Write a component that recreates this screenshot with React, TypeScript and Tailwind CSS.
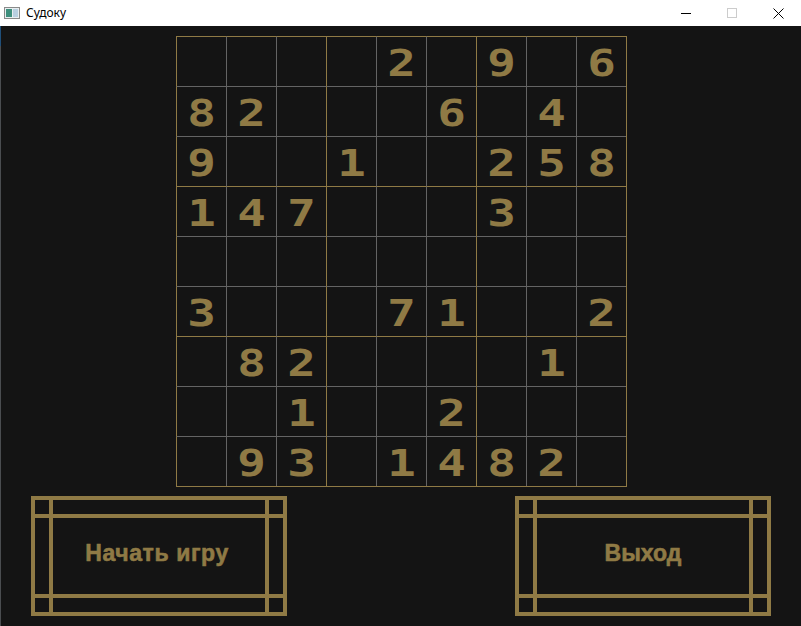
const board = [
  "    2 9 6",
  "82   6 4 ",
  "9  1  258",
  "147   3  ",
  "         ",
  "3   71  2",
  " 82    1 ",
  "  1  2   ",
  " 93 1482 ",
];

function Cell({ value, row, col }: { value: string; row: number; col: number }) {
  const left = col % 3 === 0 ? "border-l-[#8f7a45]" : "border-l-[#646464]";
  const top = row % 3 === 0 ? "border-t-[#8f7a45]" : "border-t-[#646464]";
  return (
    <div
      className={`w-[50px] h-[50px] border-l border-t ${left} ${top} flex items-center justify-center`}
    >
      {value.trim() && (
        <span className="font-['DejaVu_Sans_Mono',monospace] font-bold text-[38px] leading-none text-[#8f7a45] scale-x-[1.25] translate-y-[1px]">
          {value}
        </span>
      )}
    </div>
  );
}

function FrameButton({ label, wide }: { label: string; wide?: boolean }) {
  return (
    <button
      type="button"
      className="relative w-[256px] h-[120px] border-4 border-[#8f7a45] flex items-center justify-center"
    >
      {/* decorative frame lines */}
      <span className="absolute left-0 right-0 top-[14px] h-[4px] bg-[#8f7a45]" />
      <span className="absolute left-0 right-0 bottom-[14px] h-[4px] bg-[#8f7a45]" />
      <span className="absolute top-0 bottom-0 left-[14px] w-[4px] bg-[#8f7a45]" />
      <span className="absolute top-0 bottom-0 right-[14px] w-[4px] bg-[#8f7a45]" />
      <span
        className={`font-['Liberation_Sans',Arial,sans-serif] font-bold text-[23px] text-[#8f7a45] -mt-[5px] [-webkit-text-stroke:0.6px_#8f7a45] ${
          wide ? "tracking-[0.6px] -ml-[4px]" : ""
        }`}
      >
        {label}
      </span>
    </button>
  );
}

export default function App() {
  return (
    <div className="w-[801px] h-[626px] bg-[#141414] flex flex-col overflow-hidden">
      {/* title bar */}
      <div className="h-[26px] bg-white flex items-center shrink-0">
        <div className="ml-[4px] w-[16px] h-[12px] border border-[#8a8a8a] bg-[#e8eef0] flex p-[1px] gap-[1px]">
          <div className="w-[6px] bg-[#3e8f7d]" />
          <div className="flex-1 bg-[#b8cfe0]" />
        </div>
        <span className="ml-[6px] font-['Noto_Sans',sans-serif] text-[12px] text-black">Судоку</span>
        <div className="ml-auto flex items-center h-full">
          <div className="w-[46px] h-full flex items-center justify-center">
            <div className="w-[10px] h-px bg-black" />
          </div>
          <div className="w-[46px] h-full flex items-center justify-center">
            <div className="w-[10px] h-[10px] border border-[#cccccc]" />
          </div>
          <div className="w-[46px] h-full flex items-center justify-center">
            <svg width="11" height="11" viewBox="0 0 11 11">
              <path d="M0.5 0.5 L10.5 10.5 M10.5 0.5 L0.5 10.5" stroke="#000" strokeWidth="1" />
            </svg>
          </div>
        </div>
      </div>

      {/* content */}
      <div className="flex-1 flex">
        <div className="w-px flex flex-col">
          <div className="h-[20px] bg-[#1f4f7a]" />
          <div className="flex-1 bg-[#4a4d50]" />
        </div>
        <div className="w-[800px] flex flex-col pt-[10px]">
          <div className="ml-[175px] w-[451px] border-r border-b border-[#8f7a45] grid grid-cols-9">
            {board.map((line, r) =>
              line.split("").map((ch, c) => <Cell key={`${r}-${c}`} value={ch} row={r} col={c} />)
            )}
          </div>
          <div className="mt-[9px] px-[30px] flex justify-between">
            <FrameButton label="Начать игру" wide />
            <FrameButton label="Выход" />
          </div>
        </div>
      </div>
    </div>
  );
}
